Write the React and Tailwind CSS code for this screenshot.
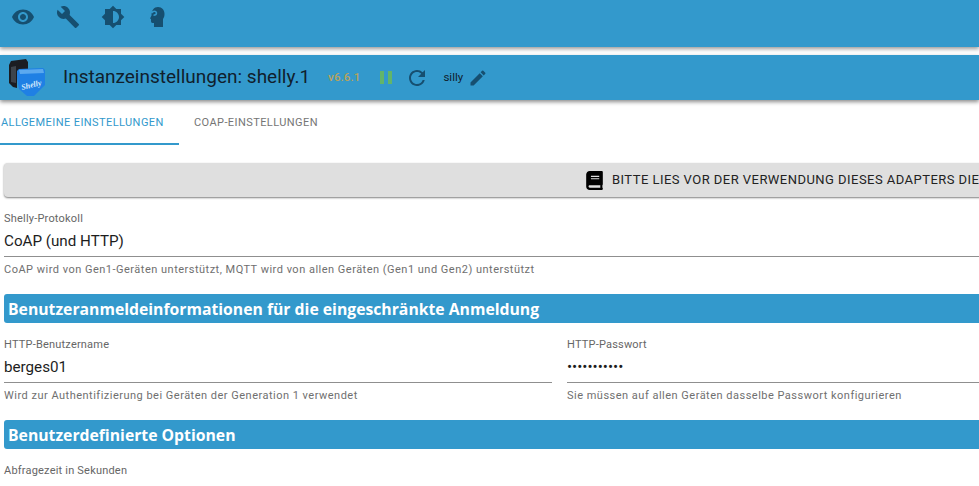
import { FaBook } from 'react-icons/fa';
import { MdVisibility, MdBuild, MdBrightness6, MdRefresh, MdEdit } from 'react-icons/md';

function ShellyLogo() {
  return (
    <svg width="46" height="40" viewBox="0 0 46 40" className="shrink-0">
      <path d="M3 3 L18 1 L20 4 L20 14 L9 14 L9 30 L5 29 L1 25 L1 7 Z" fill="#1b1d22" />
      <path d="M3 9 L8 8 L8 25 L3 24 Z" fill="#3d444c" />
      <path d="M9 13 L11 11 L35 10 L37 12 L37 27 L26 38 L19 38 L11 31 L9 20 Z" fill="#1f80e4" />
      <path d="M11 12 L35 11 L36 15 L12 16 Z" fill="#5ba9ef" />
      <text x="14" y="32" fontSize="8" fontStyle="italic" fontWeight="700" fill="#d6eafc" fontFamily="'Liberation Serif', serif" transform="rotate(-14 14 32)">Shelly</text>
    </svg>
  );
}

function HeadIcon() {
  return (
    <svg width="24" height="24" viewBox="0 0 24 24">
      <path d="M12 2C16 2 18.5 5 18.5 9C18.5 12 17.5 13 17 14L17 22L8 22L8 18L6.5 18C5.5 18 5 17 5 16L5 14L4 13.5L5.5 10.5C5.5 5 8 2 12 2Z" fill="currentColor" />
      <path d="M5.5 8C7 5.5 10 5.5 10.5 8C10.5 9.5 9 10.2 7.5 10.2" fill="none" stroke="#3399cc" strokeWidth="1.5" />
    </svg>
  );
}

function Field({ label, value, help }) {
  return (
    <div className="flex-1 min-w-0">
      <div className="text-[11px] leading-[13px] tracking-[0.2px] text-[#666]">{label}</div>
      <div className="h-[32px] border-b border-[#8f8f8f] flex items-center text-[15.2px] pt-[2px] text-[#1d1d1d]">
        {value}
      </div>
      <div className="mt-[6px] text-[11px] leading-[13px] tracking-[0.49px] text-[#6f6f6f] whitespace-nowrap">{help}</div>
    </div>
  );
}

function SectionTitle({ children }) {
  return (
    <div className="h-[29px] bg-[#3399cc] rounded-l-[3px] pl-[4px] pt-[3px] flex items-center text-white text-[15.75px] font-bold font-['Open_Sans',sans-serif] whitespace-nowrap">
      {children}
    </div>
  );
}

export default function App() {
  return (
    <div className="w-[979px] h-[486px] overflow-hidden bg-white font-['Roboto',sans-serif]">
      {/* toolbar */}
      <div className="h-[47px] bg-[#3399cc] shadow-[0_2px_4px_rgba(0,0,0,0.4)] flex items-start gap-[21px] pl-[11px] pt-[5px] text-[#164f70]">
        <MdVisibility size={24} />
        <MdBuild size={24} />
        <MdBrightness6 size={24} />
        <HeadIcon />
      </div>

      {/* instance header */}
      <div className="mt-[8px] h-[45px] bg-[#3399cc] shadow-[0_2px_4px_rgba(0,0,0,0.45)] flex items-center pl-[8px]">
        <ShellyLogo />
        <span className="ml-[9px] text-[19px] text-[#10202c]">Instanzeinstellungen: shelly.1</span>
        <span className="ml-[18px] text-[11.5px] tracking-[0.1px] text-[#b8a35c] font-medium">v6.6.1</span>
        <div className="ml-[20px] flex gap-[4px]">
          <div className="w-[4px] h-[13px] bg-[#62b56a]" />
          <div className="w-[4px] h-[13px] bg-[#62b56a]" />
        </div>
        <MdRefresh size={24} className="ml-[13px] text-[#164f70]" />
        <span className="ml-[14px] text-[11.5px] text-[#10202c]">silly</span>
        <MdEdit size={20} className="ml-[5px] text-[#164f70]" />
      </div>

      {/* tabs */}
      <div className="h-[45px] flex text-[11px] tracking-[0.42px]">
        <div className="w-[179px] h-[45px] pt-[15px] pl-px text-[#3399cc] border-b-2 border-[#3399cc]">ALLGEMEINE EINSTELLUNGEN</div>
        <div className="ml-[15px] pt-[15px] text-[#757575]">COAP-EINSTELLUNGEN</div>
      </div>

      <div className="pl-[4px] pt-[18px]">
        {/* readme button */}
        <div className="w-[1100px] h-[34px] bg-[#dfdfdf] rounded-[4px] shadow-[0_1px_2px_rgba(0,0,0,0.5)] pl-[581px] flex items-center text-[13px] tracking-[0.46px] text-[#222] whitespace-nowrap">
          <FaBook size={19} className="text-black mr-[8px] shrink-0" />
          BITTE LIES VOR DER VERWENDUNG DIESES ADAPTERS DIE DOKUMENTATION
        </div>

        <div className="mt-[15px]">
          <Field
            label="Shelly-Protokoll"
            value="CoAP (und HTTP)"
            help="CoAP wird von Gen1-Geräten unterstützt, MQTT wird von allen Geräten (Gen1 und Gen2) unterstützt"
          />
        </div>

        <div className="mt-[18px]">
          <SectionTitle>Benutzeranmeldeinformationen für die eingeschränkte Anmeldung</SectionTitle>
        </div>

        <div className="mt-[15px] w-[1111px] flex gap-[15px]">
          <Field label="HTTP-Benutzername" value="berges01" help="Wird zur Authentifizierung bei Geräten der Generation 1 verwendet" />
          <Field label="HTTP-Passwort" value="•••••••••••" help="Sie müssen auf allen Geräten dasselbe Passwort konfigurieren" />
        </div>

        <div className="mt-[18px]">
          <SectionTitle>Benutzerdefinierte Optionen</SectionTitle>
        </div>

        <div className="mt-[15px] text-[11px] leading-[13px] tracking-[0.2px] text-[#666]">Abfragezeit in Sekunden</div>
      </div>
    </div>
  );
}
